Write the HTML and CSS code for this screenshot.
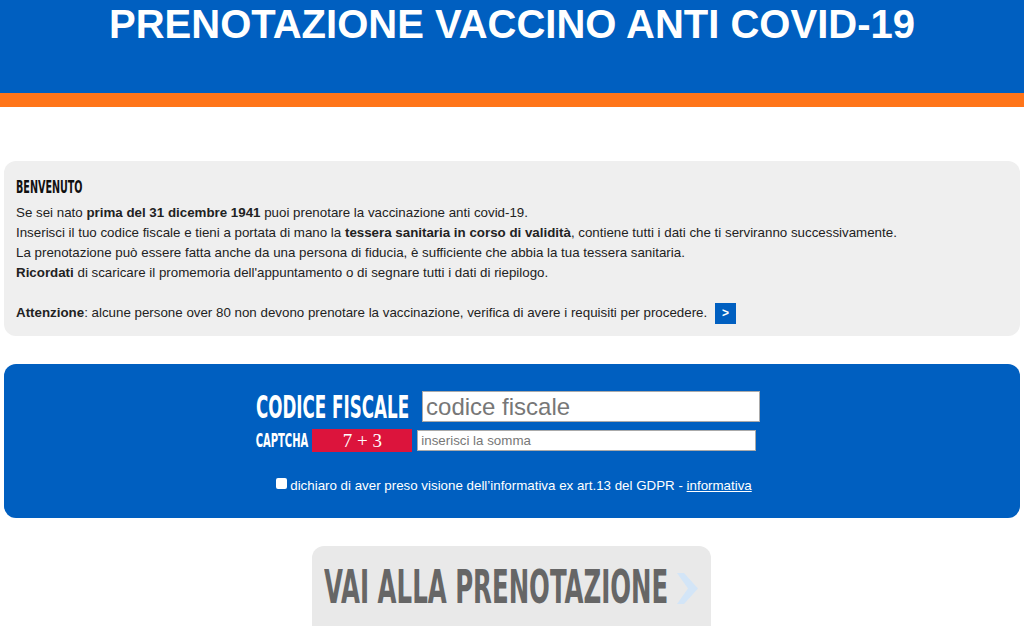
FILE: index.html
```html
<!DOCTYPE html>
<html lang="it">
<head>
<meta charset="utf-8">
<title>Prenotazione vaccino anti COVID-19</title>
<link rel="stylesheet" href="styles.css">
</head>
<body>
<header class="top">
  <h1 class="title">PRENOTAZIONE VACCINO ANTI COVID-19</h1>
</header>
<div class="stripe"></div>

<section class="welcome">
  <div class="welcome-head"><span class="cond head-text">BENVENUTO</span></div>
  <p class="welcome-text">Se sei nato <b>prima del 31 dicembre 1941</b> puoi prenotare la vaccinazione anti covid-19.<br>
  Inserisci il tuo codice fiscale e tieni a portata di mano la <b>tessera sanitaria in corso di validità</b>, contiene tutti i dati che ti serviranno successivamente.<br>
  La prenotazione può essere fatta anche da una persona di fiducia, è sufficiente che abbia la tua tessera sanitaria.<br>
  <b>Ricordati</b> di scaricare il promemoria dell'appuntamento o di segnare tutti i dati di riepilogo.</p>
  <p class="welcome-text warn"><b>Attenzione</b>: alcune persone over 80 non devono prenotare la vaccinazione, verifica di avere i requisiti per procedere. <a class="go" href="#">&gt;</a></p>
</section>

<section class="form-box">
  <div class="row row-cf">
    <label class="lbl-cf"><span class="cond cf-text">CODICE FISCALE</span></label>
    <input class="in-cf" type="text" placeholder="codice fiscale">
  </div>
  <div class="row row-cap">
    <label class="lbl-cap"><span class="cond cap-text">CAPTCHA</span></label>
    <div class="captcha">7 + 3</div>
    <input class="in-cap" type="text" placeholder="inserisci la somma">
  </div>
  <div class="row row-check">
    <input class="check" type="checkbox">
    <span class="check-text">dichiaro di aver preso visione dell’informativa ex art.13 del GDPR - <a href="#" class="link">informativa</a></span>
  </div>
</section>

<div class="cta-wrap">
  <a class="cta" href="#"><span class="cond cta-text">VAI ALLA PRENOTAZIONE</span><svg class="chev" width="21" height="31" viewBox="0 0 21 31"><polygon points="0,0 7,0 21,15.5 7,31 0,31 11,15.5" fill="#d3e5f7"/></svg></a>
</div>
</body>
</html>
```

FILE: styles.css
```css
* { box-sizing: border-box; }
html, body { margin: 0; padding: 0; }
body {
  font-family: "Liberation Sans", Arial, sans-serif;
  color: #222;
  background: #fff;
  overflow: hidden;
}
.top {
  background: #005fc0;
  height: 93px;
  padding-top: 1px;
}
.title {
  margin: 0;
  text-align: center;
  color: #fff;
  font-size: 40px;
  line-height: 46px;
  font-weight: bold;
}
.stripe {
  height: 14px;
  background: #ff751a;
}
.cond {
  display: inline-block;
  font-family: "DejaVu Sans Condensed", "Liberation Sans", sans-serif;
  font-weight: bold;
  white-space: nowrap;
}
.welcome {
  margin: 54px 4px 0;
  background: #efefef;
  border-radius: 12px;
  padding: 16px 12px 12px;
}
.welcome-head {
  font-size: 10.7px;
  line-height: 20px;
  height: 20px;
  color: #111;
  margin-bottom: 6px;
}
.head-text { transform: scaleY(1.67); }
.welcome-text {
  margin: 0;
  font-size: 13.33px;
  line-height: 20px;
}
.warn { margin-top: 20px; }
.go {
  display: inline-block;
  width: 21px;
  height: 21px;
  margin-left: 4px;
  background: #005fc0;
  color: #fff;
  font-weight: bold;
  font-size: 12px;
  line-height: 21px;
  text-align: center;
  text-decoration: none;
  vertical-align: middle;
}
.form-box {
  margin: 28px 4px 0;
  background: #005fc0;
  border-radius: 12px;
  padding: 27px 8px 22px 0;
  color: #fff;
  height: 154px;
}
.row {
  display: flex;
  justify-content: center;
  align-items: center;
}
.lbl-cf { font-size: 18.6px; line-height: 31px; margin-right: 13px; }
.cf-text { transform: scaleY(1.7); }
.in-cf {
  width: 338px;
  height: 31px;
  border: 1px solid #aaa;
  background: #fff;
  font-family: "Liberation Sans", Arial, sans-serif;
  font-size: 24px;
  padding: 0 3px;
  color: #333;
}
.in-cf::placeholder { color: #777; }
.row-cap { margin-top: 7px; padding-right: 4px; }
.lbl-cap { font-size: 11.1px; line-height: 23px; margin-right: 4px; }
.cap-text { transform: scaleY(1.73); }
.captcha {
  width: 100px;
  height: 23px;
  background: #dc143c;
  color: #fff;
  font-family: "Liberation Serif", "Times New Roman", serif;
  font-size: 19px;
  line-height: 23px;
  text-align: center;
  margin-right: 5px;
}
.in-cap {
  width: 339px;
  height: 21px;
  border: 1px solid #aaa;
  background: #fff;
  font-family: "Liberation Sans", Arial, sans-serif;
  font-size: 13.33px;
  padding: 0 3px;
}
.in-cap::placeholder { color: #777; }
.row-check {
  margin-top: 24px;
  font-size: 13.33px;
  line-height: 20px;
  padding-left: 12px;
}
.check {
  appearance: none;
  -webkit-appearance: none;
  width: 11px;
  height: 11px;
  margin: 2px 3px 0 0;
  background: #fff;
  border-radius: 2px;
  align-self: flex-start;
}
.link { color: #fff; }
.cta-wrap {
  display: flex;
  justify-content: center;
  margin-top: 28px;
}
.cta {
  display: flex;
  align-items: flex-start;
  width: 399px;
  height: 100px;
  margin-left: -1px;
  padding: 22px 0 0 12px;
  background: #e9e9e9;
  border-radius: 12px;
  text-decoration: none;
}
.cta-text {
  color: #666;
  font-size: 27.2px;
  line-height: 40px;
  transform: scaleY(1.67);
}
.chev { margin: 5px 0 0 9px; }
```
